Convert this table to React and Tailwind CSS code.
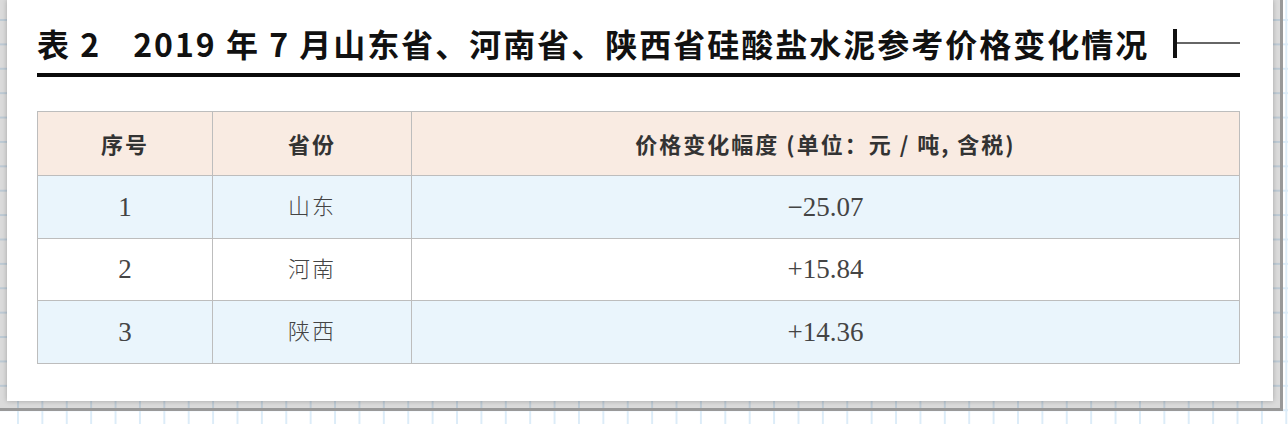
export default function App() {
  const rows = [
    { n: "1", p: "山东", v: "−25.07", bg: "bg-[#eaf5fc]" },
    { n: "2", p: "河南", v: "+15.84", bg: "bg-white" },
    { n: "3", p: "陕西", v: "+14.36", bg: "bg-[#eaf5fc]" },
  ];
  const sans = "font-['Noto_Sans_CJK_SC','Noto_Sans',sans-serif]";
  const body = "font-['Liberation_Serif','Noto_Sans_CJK_SC',serif]";
  return (
    <div className="w-[1288px] h-[424px] overflow-hidden bg-white bg-[linear-gradient(to_right,#dcecf8_2px,transparent_2px),linear-gradient(to_bottom,#dcecf8_2px,transparent_2px)] bg-[size:24.4px_24.4px] bg-[position:17px_19px]">
      <div className="w-[1283px] h-[411px] bg-[rgba(0,0,0,0.14)] border-r-[3px] border-b-[3px] border-[#999]">
        <div className="ml-[7px] w-[1266px] h-[401px] bg-white shadow-[0_0_5px_rgba(0,0,0,0.25)] pt-[24px] pl-[30px] pr-[33px]">
          <div className="flex items-center h-[38px]">
            <div className={`${sans} font-bold text-[32px] leading-none text-[#111] tracking-[2px] whitespace-nowrap flex-1`}>
              <span className="mr-[32px]">表 2</span>
              2019 年 7 月山东省、河南省、陕西省硅酸盐水泥参考价格变化情况
            </div>
            <div className="flex items-center">
              <div className="w-[4px] h-[29px] bg-[#111]" />
              <div className="w-[63px] h-[2px] bg-[#666]" />
            </div>
          </div>
          <div className="mt-[11px] h-[4px] bg-[#0a0a0a]" />
          <div className="mt-[34px] border border-[#bdbdbd]">
            <div className={`flex h-[63px] bg-[#f9ebe2] ${sans} font-bold text-[22px] text-[#333] tracking-[2px]`}>
              <div className="w-[175px] flex items-center justify-center border-r border-[#bdbdbd]">序号</div>
              <div className="w-[199px] flex items-center justify-center border-r border-[#bdbdbd]">省份</div>
              <div className="flex-1 flex items-center justify-center">价格变化幅度 (单位：元 / 吨, 含税)</div>
            </div>
            {rows.map((r) => (
              <div key={r.n} className={`flex h-[62.5px] border-t border-[#bdbdbd] ${r.bg} ${body} text-[27px] text-[#444]`}>
                <div className="w-[175px] flex items-center justify-center border-r border-[#bdbdbd]">{r.n}</div>
                <div className="w-[199px] flex items-center justify-center border-r border-[#bdbdbd] text-[22px] font-light tracking-[2px]">{r.p}</div>
                <div className="flex-1 flex items-center justify-center">{r.v}</div>
              </div>
            ))}
          </div>
        </div>
      </div>
    </div>
  );
}
